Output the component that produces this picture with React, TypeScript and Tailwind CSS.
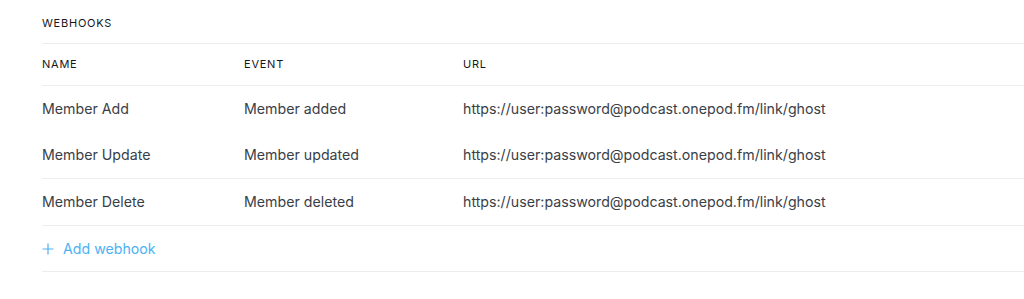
import React from 'react';

const hooks = [
  { name: 'Member Add', event: 'Member added', url: 'https://user:password@podcast.onepod.fm/link/ghost' },
  { name: 'Member Update', event: 'Member updated', url: 'https://user:password@podcast.onepod.fm/link/ghost' },
  { name: 'Member Delete', event: 'Member deleted', url: 'https://user:password@podcast.onepod.fm/link/ghost' },
];

const App: React.FC = () => {
  return (
    <div className="min-h-[299px] w-full bg-white pl-[42px] font-['Inter',sans-serif] text-[#394047]">
      <div className="flex h-[43px] items-center pt-[4px] text-[11px] tracking-[0.07em] text-[#15171a]">
        WEBHOOKS
      </div>

      <div className="grid grid-cols-[202px_219px_1fr] border-t border-[#ebeef0]">
        <div className="flex h-[41px] items-center text-[11px] tracking-[0.07em] text-[#15171a]">NAME</div>
        <div className="flex h-[41px] items-center text-[11px] tracking-[0.07em] text-[#15171a]">EVENT</div>
        <div className="flex h-[41px] items-center text-[11px] tracking-[0.07em] text-[#15171a]">URL</div>
      </div>

      {hooks.map((h, i) => (
        <div
          key={h.name}
          className={`grid grid-cols-[202px_219px_1fr] items-center border-t text-[14.2px] ${
            i === 0 ? 'h-[46px] border-[#ebeef0]' : i === 1 ? 'h-[47px] border-transparent' : 'h-[47px] border-[#ebeef0]'
          }`}
        >
          <div>{h.name}</div>
          <div>{h.event}</div>
          <div>{h.url}</div>
        </div>
      ))}

      <div className="flex h-[46px] items-center gap-[9px] border-t border-[#ebeef0] text-[14.2px] text-[#4cb1f5]">
        <svg width="12" height="12" viewBox="0 0 12 12" fill="none" stroke="#4cb1f5" strokeWidth="1.2">
          <path d="M6 0.5v11M0.5 6h11" />
        </svg>
        <span>Add webhook</span>
      </div>
      <div className="border-t border-[#ebeef0]" />
    </div>
  );
};

export default App;
